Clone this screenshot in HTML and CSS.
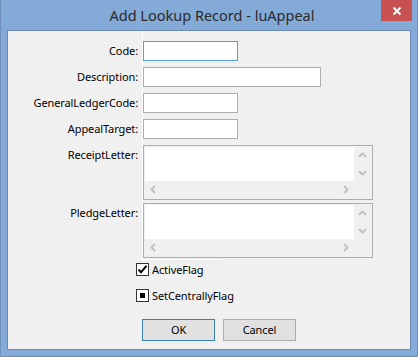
FILE: index.html
```html
<!DOCTYPE html>
<html>
<head>
<meta charset="utf-8">
<link rel="stylesheet" href="styles.css">
</head>
<body>
<div class="window">
  <div class="titlebar">
    <span class="tb-spacer"></span>
    <div class="title">Add Lookup Record - luAppeal</div>
    <div class="tb-right">
      <div class="close">
        <svg width="10" height="10" viewBox="0 0 10 10"><path d="M1.5 1.5 L8.5 8.5 M8.5 1.5 L1.5 8.5" stroke="#fff" stroke-width="2" fill="none"/></svg>
      </div>
    </div>
  </div>
  <div class="client">
    <div class="form">
      <div class="rail"></div>
      <div class="lbl r2">Code:</div>
      <div class="fld r2"><div class="input focus w95"></div></div>
      <div class="lbl r3">Description:</div>
      <div class="fld r3"><div class="input w178"></div></div>
      <div class="lbl r4">GeneralLedgerCode:</div>
      <div class="fld r4"><div class="input w95"></div></div>
      <div class="lbl r5">AppealTarget:</div>
      <div class="fld r5"><div class="input w95"></div></div>
      <div class="lbl r6">ReceiptLetter:</div>
      <div class="fld r6">
        <div class="memo gap3">
          <div class="memo-text"></div>
          <div class="vscroll">
            <svg class="arr" width="17" height="17" viewBox="0 0 17 17"><path d="M5 10 L8.5 6.5 L12 10" stroke="#c2c2c2" stroke-width="2" fill="none"/></svg>
            <svg class="arr" width="17" height="17" viewBox="0 0 17 17"><path d="M5 7 L8.5 10.5 L12 7" stroke="#c2c2c2" stroke-width="2" fill="none"/></svg>
          </div>
          <div class="hscroll">
            <svg class="arr" width="17" height="17" viewBox="0 0 17 17"><path d="M10 5 L6.5 8.5 L10 12" stroke="#c2c2c2" stroke-width="2" fill="none"/></svg>
            <svg class="arr" width="17" height="17" viewBox="0 0 17 17"><path d="M7 5 L10.5 8.5 L7 12" stroke="#c2c2c2" stroke-width="2" fill="none"/></svg>
          </div>
          <div class="corner"></div>
        </div>
      </div>
      <div class="lbl r7">PledgeLetter:</div>
      <div class="fld r7">
        <div class="memo gap1">
          <div class="memo-text"></div>
          <div class="vscroll">
            <svg class="arr" width="17" height="17" viewBox="0 0 17 17"><path d="M5 10 L8.5 6.5 L12 10" stroke="#c2c2c2" stroke-width="2" fill="none"/></svg>
            <svg class="arr" width="17" height="17" viewBox="0 0 17 17"><path d="M5 7 L8.5 10.5 L12 7" stroke="#c2c2c2" stroke-width="2" fill="none"/></svg>
          </div>
          <div class="hscroll">
            <svg class="arr" width="17" height="17" viewBox="0 0 17 17"><path d="M10 5 L6.5 8.5 L10 12" stroke="#c2c2c2" stroke-width="2" fill="none"/></svg>
            <svg class="arr" width="17" height="17" viewBox="0 0 17 17"><path d="M7 5 L10.5 8.5 L7 12" stroke="#c2c2c2" stroke-width="2" fill="none"/></svg>
          </div>
          <div class="corner"></div>
        </div>
      </div>
      <div class="rail-foot"></div>
    </div>
    <div class="checks">
      <div class="check">
        <span class="box"><svg width="11" height="11" viewBox="0 0 11 11"><path d="M1.5 5.5 L4 8.2 L9.5 1.8" stroke="#000" stroke-width="2" fill="none"/></svg></span>
        <span class="ctext">ActiveFlag</span>
      </div>
      <div class="check">
        <span class="box"><span class="indet"></span></span>
        <span class="ctext">SetCentrallyFlag</span>
      </div>
    </div>
    <div class="buttons">
      <div class="btn default">OK</div>
      <div class="btn">Cancel</div>
    </div>
  </div>
</div>
</body>
</html>
```
FILE: styles.css
```css
html, body {
  margin: 0;
  padding: 0;
}
body {
  width: 418px;
  height: 357px;
  overflow: hidden;
  font-family: "Noto Sans", "Open Sans", sans-serif;
  font-size: 11px;
  letter-spacing: -0.1px;
  color: #000;
}
.window {
  box-sizing: border-box;
  width: 418px;
  height: 357px;
  background: #84aad7;
  border: 1px solid #6f8fbd;
  border-top: none;
  display: flex;
  flex-direction: column;
}
.titlebar {
  height: 30px;
  display: grid;
  grid-template-columns: 1fr auto 1fr;
  align-items: start;
}
.title {
  font-size: 14.5px;
  letter-spacing: 0;
  color: #2b2b2b;
  line-height: 30px;
  padding-left: 6px;
}
.tb-right {
  display: flex;
  justify-content: flex-end;
  padding-right: 5px;
}
.close {
  width: 31px;
  height: 21px;
  background: #c75050;
  display: flex;
  align-items: center;
  justify-content: center;
}
.close svg { display: block; }
.client {
  flex: 1;
  margin: 0 6px 6px 6px;
  border: 1px solid #6b8bb7;
  background: #f0f0f0;
  display: flex;
  flex-direction: column;
}
.form {
  display: grid;
  grid-template-columns: 134px 1fr;
  grid-template-rows: 10px auto auto auto auto auto auto 1px;
}
.rail {
  grid-column: 2;
  grid-row: 1 / -1;
  border-left: 1px solid #ffffff;
}
.rail-foot {
  grid-column: 2;
  grid-row: 8;
  width: 80px;
  height: 1px;
  background: #ffffff;
}
.lbl {
  grid-column: 1;
  text-align: right;
  padding-right: 4px;
  height: 20px;
  line-height: 20px;
  white-space: nowrap;
}
.fld {
  grid-column: 2;
  margin-left: 1px;
}
.r2 { grid-row: 2; }
.r3 { grid-row: 3; }
.r4 { grid-row: 4; }
.r5 { grid-row: 5; }
.r6 { grid-row: 6; }
.r7 { grid-row: 7; }
.input {
  box-sizing: border-box;
  height: 20px;
  background: #fff;
  border: 1px solid #abadb3;
  margin-bottom: 6px;
}
.input.focus { border-color: #569de5; }
.w95 { width: 95px; }
.w178 { width: 178px; }
.memo {
  box-sizing: border-box;
  width: 230px;
  height: 55px;
  border: 1px solid #abadb3;
  padding: 1px;
  background: #f0f0f0;
  display: grid;
  grid-template-columns: 1fr 17px;
  grid-template-rows: 1fr 17px;
}
.gap3 { margin-bottom: 3px; }
.gap1 { margin-bottom: 1px; }
.memo-text { background: #fff; }
.vscroll {
  display: flex;
  flex-direction: column;
  justify-content: space-between;
  background: #f0f0f0;
}
.hscroll {
  display: flex;
  justify-content: space-between;
  background: #f0f0f0;
}
.arr { display: block; }
.corner { background: #f0f0f0; }
.checks {
  padding-left: 128px;
  margin-top: 3px;
  display: flex;
  flex-direction: column;
  gap: 13px;
}
.check {
  display: flex;
  align-items: center;
  height: 13px;
  gap: 3px;
}
.box {
  box-sizing: border-box;
  width: 13px;
  height: 13px;
  border: 1px solid #333;
  background: #fff;
  display: flex;
  align-items: center;
  justify-content: center;
}
.box svg { display: block; }
.indet {
  width: 5px;
  height: 5px;
  background: #000;
}
.ctext {
  line-height: 13px;
  white-space: nowrap;
}
.buttons {
  display: flex;
  gap: 8px;
  padding-left: 134px;
  margin-top: 17px;
}
.btn {
  box-sizing: border-box;
  width: 73px;
  height: 22px;
  border: 1px solid #adadad;
  background: #e1e1e1;
  text-align: center;
  line-height: 20px;
}
.btn.default { border-color: #3c7fb1; }
```
